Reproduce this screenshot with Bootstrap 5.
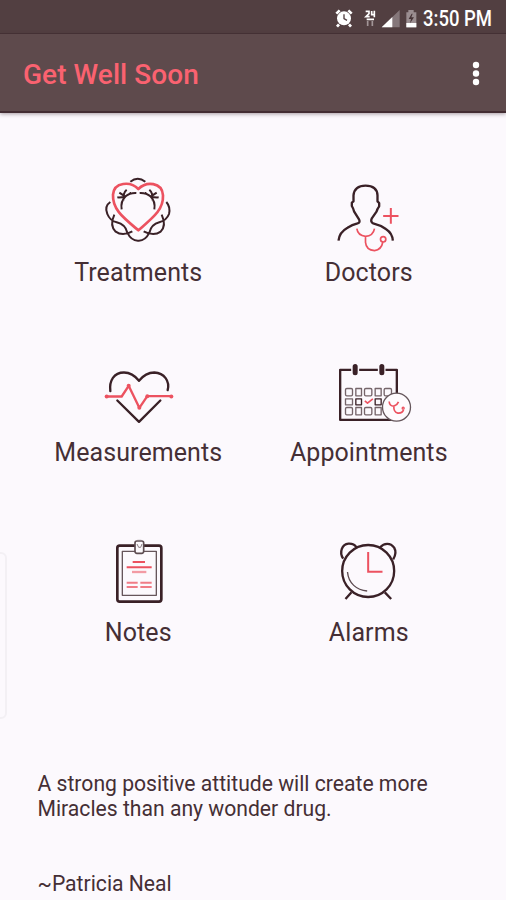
<!DOCTYPE html>
<html lang="en">
<head>
<meta charset="utf-8">
<meta name="viewport" content="width=device-width, initial-scale=1">
<title>Get Well Soon</title>
<link href="https://cdn.jsdelivr.net/npm/bootstrap@5.3.0/dist/css/bootstrap.min.css" rel="stylesheet">
<style>
:root{--ink:#3a2127;--rose:#ec5260}
body{font-family:Roboto,sans-serif;background:#fcf9fd;color:#452f35;height:900px;overflow:hidden}
.statusbar{height:34px;background:#523f41;border-bottom:1px solid #463235;padding:4px 14px 0 0;color:#fff}
.clock{font-size:21.5px;line-height:32px;width:69px;white-space:nowrap;transform:scaleX(.86);transform-origin:left}
.appbar{height:79px;background:#5e4a4c;border-bottom:2px solid #432d33;box-shadow:0 1px 4px rgba(60,40,50,.45);padding:5px 22px 0 23px}
.apptitle{font-size:28px;font-weight:500;color:#fa6270;line-height:1;letter-spacing:.05px}
.menu-btn{width:16px}
.tiles{padding:52px 22px 0 23px}
.tile{height:180.6px;color:inherit}
.tile svg{width:90px;height:90px;margin-right:1px;fill:none;stroke:var(--ink);stroke-width:7;stroke-linejoin:round}
.tile svg .r{stroke:var(--rose)}
.tile-name{font-size:25px;line-height:34px;letter-spacing:.08px}
.tile:nth-child(-n+2) .tile-name{line-height:35px}
.quote{padding:64.4px 30px 0 37.5px;font-size:21.15px;line-height:25px}
.author{margin-top:50px}
.edge-handle{left:-8px;top:552px;width:15px;height:167px;border:2px solid #f3f0f4;border-radius:6px}
</style>
<script src="https://cdn.jsdelivr.net/npm/bootstrap@5.3.0/dist/js/bootstrap.bundle.min.js"></script>
</head>
<body>
<div class="statusbar d-flex align-items-center justify-content-end">
  <svg width="90" height="32" viewBox="0 0 270 96" aria-hidden="true">
    <g transform="translate(-2 -6)">
    <g fill="#fff" stroke="#fff"><circle cx="35" cy="52" r="21" stroke="none"/><path d="M12 38l10-10M58 38L48 28M20 70l-6 7M50 70l6 7" stroke-width="8"/><path d="M35 40v13l9 5" fill="none" stroke="#523f41" stroke-width="4"/></g>
    <g fill="none" stroke="#fff" stroke-width="5"><path d="M100 31h10v7l-9 9h11M118 30v11h10M126 29v20M103 55h22"/><path d="M106 60v15M120 60v15" stroke="#a29597"/></g>
    <path d="M202 27v52h-54z" fill="#85777a"/><path d="M180 48v31h-32z" fill="#fff"/>
    <path d="M222 34h6v-7h16v7h8v45h-30z" fill="#9a8d90"/><path d="M222 66h30v13h-30z" fill="#fff"/><path d="M238 38l-9 16h7l-3 13 12-18h-8l4-11z" fill="#463437"/>
    </g>
  </svg>
  <span class="clock fw-medium">3:50 PM</span>
</div>
<nav class="appbar d-flex align-items-center justify-content-between position-relative">
  <span class="apptitle">Get Well Soon</span>
  <svg class="menu-btn" height="32" viewBox="0 0 16 32" fill="#fff" role="img" aria-label="Menu"><circle cx="8" cy="6" r="3.2"/><circle cx="8" cy="14.5" r="3.2"/><circle cx="8" cy="23" r="3.2"/></svg>
</nav>
<main>
  <div class="tiles">
    <div class="row g-0">
      <div class="col-6 tile d-flex flex-column align-items-center">
        <svg viewBox="9 0 270 270">
          <path stroke-width="6" d="M121 50Q143 32 166 50"/>
          <path stroke-width="6" d="M95 133Q91 109 107 94Q119 83 139 84M82 97Q103 99 123 83M110 74Q98 84 101 106M88 83L106 95M193 133Q197 109 181 94Q169 83 149 84M206 97Q185 99 165 83M178 74Q190 84 187 106M200 83L182 95"/>
          <path stroke-width="6" d="M61 111Q42 124 52 147Q60 167 80 172Q106 178 112 203Q124 228 145 227Q166 228 178 203Q184 178 208 172Q230 166 237 147Q242 126 229 111M73 149Q58 182 77 200Q98 215 127 199M215 149Q230 182 212 200Q191 215 161 199"/>
          <path class="r" stroke-width="8" d="M145 72C122 48 72 50 69 89C67 134 100 158 145 196C189 158 221 134 219 91C216 51 169 48 145 72Z"/>
        </svg>
        <span class="tile-name">Treatments</span>
      </div>
      <div class="col-6 tile d-flex flex-column align-items-center">
        <svg viewBox="-4.5 -15 270 270">
          <path d="M42 212Q44 187 69 173Q83 164 99 160Q108 157 104 149L89 125Q87 116 82 108V98L87 94V76C89 57 102 47 123 47C145 47 158 57 159 76V94L164 99V109Q158 117 156 125L142 145Q137 156 146 160Q167 165 184 177Q204 190 205 212"/>
          <path class="r" stroke-width="5" d="M97 176Q100 197 123 199Q146 198 150 176M123 200V217Q125 240 150 242Q171 239 175 216"/><circle class="r" stroke-width="5" cx="176" cy="208" r="8"/>
          <path class="r" stroke-width="6" d="M176 138h46M199 114v47"/>
        </svg>
        <span class="tile-name">Doctors</span>
      </div>
      <div class="col-6 tile d-flex flex-column align-items-center">
        <svg viewBox="-6 -28.5 270 270">
          <path stroke-linecap="round" d="M46 107C42 75 57 51 87 51C108 51 121 62 132 76C143 62 157 51 178 51C208 52 225 77 218 104M67 135L132 199L196 135"/>
          <path class="r" d="M36 123H80L101 91L133 157L157 122H228"/>
          <g fill="#ec5260" stroke="none"><circle cx="35" cy="123" r="6"/><circle cx="101" cy="91" r="6"/><circle cx="133" cy="157" r="6"/><circle cx="157" cy="122" r="6"/><circle cx="229" cy="123" r="6"/></g>
        </svg>
        <span class="tile-name">Measurements</span>
      </div>
      <div class="col-6 tile d-flex flex-column align-items-center">
        <svg viewBox="-4.5 -13.5 270 270">
          <path d="M80 58H47V208H202M104 58H160M183 58H217V130"/>
          <path stroke-linecap="round" stroke-width="15" d="M92 48V67M172 48V67"/>
          <g stroke="#75656a" stroke-width="4"><rect x="63" y="114" width="21" height="22" rx="4"/><rect x="94" y="114" width="17" height="22"/><rect x="120" y="114" width="22" height="22" rx="4"/><rect x="152" y="114" width="18" height="22"/><rect x="179" y="114" width="22" height="22" rx="4"/><rect x="63" y="145" width="21" height="18"/><rect x="94" y="145" width="17" height="18" stroke="#3a2127"/><rect x="152" y="145" width="18" height="18" stroke="#3a2127"/><rect x="63" y="171" width="21" height="22" rx="4"/><rect x="94" y="171" width="17" height="22"/><rect x="120" y="171" width="22" height="22" rx="4"/><rect x="152" y="171" width="18" height="22"/></g>
          <path class="r" stroke-width="5" d="M121 151l8 7 16-13"/>
          <circle cx="216" cy="170" r="42" fill="#fefbfe" stroke="#65565b" stroke-width="4"/>
          <path class="r" stroke-width="5" d="M194 153Q195 167 208 167Q218 164 222 154M208 167Q207 185 220 188Q234 189 237 178"/><circle class="r" cx="236" cy="173" r="3" stroke-width="4"/>
        </svg>
        <span class="tile-name">Appointments</span>
      </div>
      <div class="col-6 tile d-flex flex-column align-items-center">
        <svg viewBox="-21 -12 270 270">
          <rect x="52" y="47" width="132" height="168" rx="7" stroke-width="8"/>
          <rect x="67" y="64" width="102" height="132" stroke="#66565b" stroke-width="4"/>
          <rect x="105" y="33" width="26" height="37" rx="6" fill="#fcf9fd" stroke="#5d4c51" stroke-width="5"/>
          <path d="M111 42l5 10h6l4-10M112 31h12" stroke="#8b7d82" stroke-width="3"/>
          <path class="r" stroke-width="6" d="M98 96h37M80 112h75"/><path stroke="#f39ba4" stroke-width="7" d="M96 126h43"/>
          <path stroke="#f07c87" stroke-width="6" d="M80 158h33M121 158h34M80 171h33M121 171h34"/>
        </svg>
        <span class="tile-name">Notes</span>
      </div>
      <div class="col-6 tile d-flex flex-column align-items-center">
        <svg viewBox="-4.5 -12 270 270">
          <circle cx="131" cy="123" r="78"/>
          <path stroke-width="7" d="M56 86C43 66 53 43 72 41Q88 40 96 52M167 52C179 38 198 38 209 53Q218 69 206 88"/>
          <path d="M81 187L63 207M181 187L200 207"/>
          <path stroke-width="4" stroke="#5c4a50" d="M69 126C72 160 96 180 128 183"/>
          <path class="r" stroke-width="6" stroke-linejoin="miter" d="M131 66V125H174"/>
        </svg>
        <span class="tile-name">Alarms</span>
      </div>
    </div>
  </div>
  <div class="quote">
    <p class="mb-0">A strong positive attitude will create more<br>Miracles than any wonder drug.</p>
    <p class="author mb-0">~Patricia Neal</p>
  </div>
</main>
<div class="edge-handle position-absolute"></div>
</body>
</html>
